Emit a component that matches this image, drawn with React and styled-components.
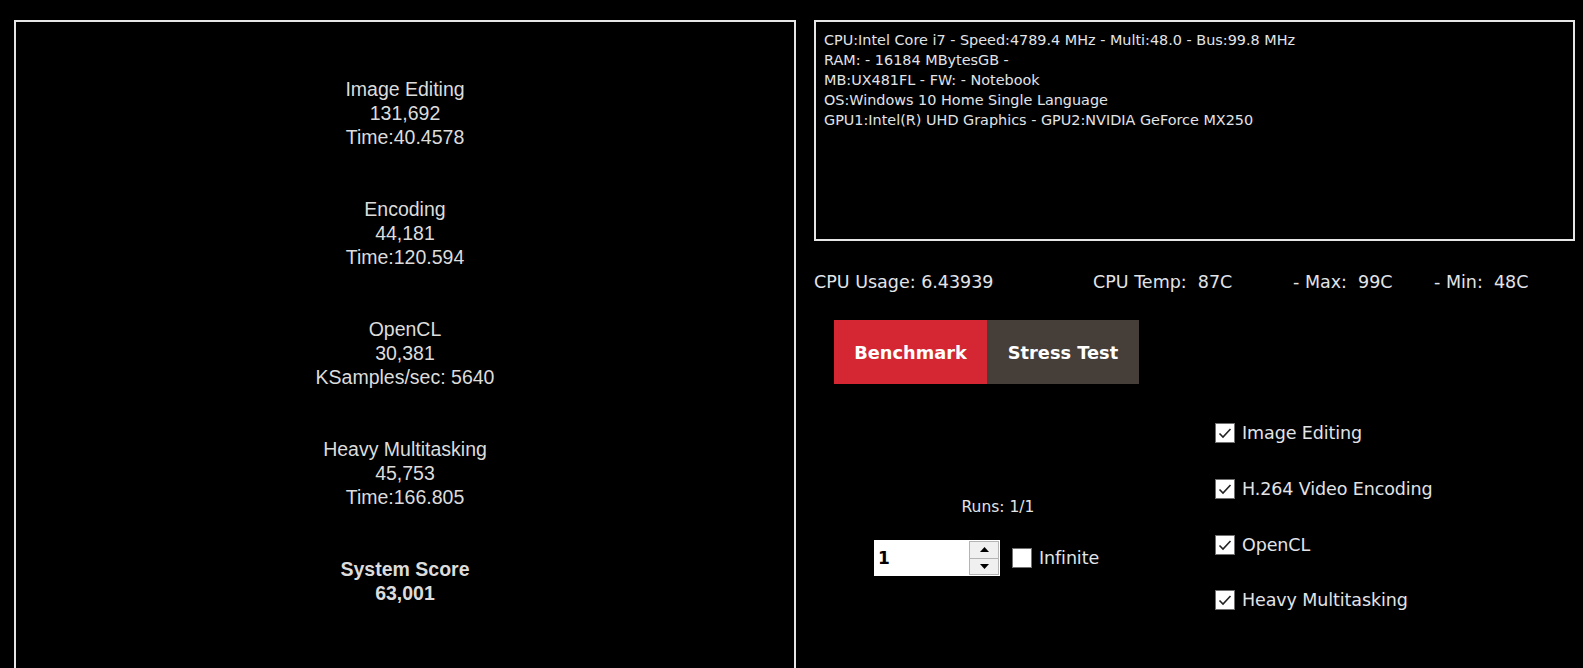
import React from 'react'
import styled, { createGlobalStyle } from 'styled-components'

const GlobalStyle = createGlobalStyle`
    html, body {
        margin: 0;
        padding: 0;
        background: #000;
        overflow: hidden;
    }
`;

const Page = styled.div`
    display: flex;
    align-items: flex-start;
    gap: 18px;
    padding: 20px 0 0 14px;
    height: 668px;
    box-sizing: border-box;
`;

const ResultsPanel = styled.div`
    width: 782px;
    height: 720px;
    box-sizing: border-box;
    border: 2px solid #e6e6e6;
    padding-top: 55px;
    display: flex;
    flex-direction: column;
    align-items: center;
    gap: 48px;
    font-family: 'Liberation Sans', Arial, sans-serif;
    font-size: 19.5px;
    line-height: 24px;
    color: #dcdcdc;
`;

const ResultGroup = styled.div`
    text-align: center;
    font-weight: ${props => props.$bold ? 700 : 400};
`;

const RightColumn = styled.div`
    width: 761px;
    display: flex;
    flex-direction: column;
    font-family: 'DejaVu Sans', sans-serif;
    color: #e2e4e8;
`;

const InfoBox = styled.div`
    height: 221px;
    box-sizing: border-box;
    border: 2px solid #e6e6e6;
    padding: 8px 8px;
    font-size: 14.4px;
    line-height: 20px;
`;

const StatusRow = styled.div`
    display: grid;
    grid-template-columns: 279px 200px 141px auto;
    margin-top: 31px;
    font-size: 17.5px;
    line-height: 20px;
    white-space: pre;
`;

const ModeTabs = styled.div`
    display: flex;
    margin: 28px 0 0 20px;
`;

const ModeTab = styled.button`
    width: ${props => props.$width}px;
    height: 64px;
    border: none;
    padding: 0;
    background: ${props => props.$active ? '#d42733' : '#453e39'};
    color: #fff;
    font-family: 'DejaVu Sans', sans-serif;
    font-weight: 700;
    font-size: 17.8px;
    cursor: pointer;
`;

const LowerArea = styled.div`
    display: grid;
    grid-template-columns: 401px auto;
    margin-top: 39px;
`;

const RunsBlock = styled.div`
    padding: 74px 0 0 60px;
    display: flex;
    flex-direction: column;
`;

const RunsLabel = styled.div`
    width: 248px;
    text-align: center;
    font-size: 15.5px;
    line-height: 20px;
`;

const SpinRow = styled.div`
    display: flex;
    align-items: center;
    margin-top: 23px;
`;

const SpinBox = styled.div`
    width: 126px;
    height: 36px;
    background: #fff;
    display: flex;
    align-items: center;
    justify-content: space-between;
    box-sizing: border-box;
    padding: 1px 1px 1px 4px;
`;

const SpinValue = styled.span`
    color: #000;
    font-weight: 700;
    font-size: 17px;
    font-family: 'DejaVu Sans', sans-serif;
`;

const SpinButtons = styled.div`
    width: 30px;
    height: 34px;
    display: flex;
    flex-direction: column;
`;

const SpinButton = styled.div`
    flex: 1;
    background: #f0f0f0;
    border: 1px solid #b4b4b4;
    display: flex;
    align-items: center;
    justify-content: center;
    &:first-child {
        border-bottom: none;
    }
`;

const Box = styled.span`
    width: 20px;
    height: 20px;
    box-sizing: border-box;
    background: #fff;
    border: 1px solid #707070;
    display: inline-flex;
    align-items: center;
    justify-content: center;
    flex-shrink: 0;
`;

const CheckLabel = styled.label`
    display: flex;
    align-items: center;
    gap: 7px;
    font-size: 17.5px;
    line-height: 20px;
    letter-spacing: -0.1px;
    cursor: pointer;
`;

const InfiniteLabel = styled(CheckLabel)`
    margin-left: 12px;
`;

const TestList = styled.div`
    display: flex;
    flex-direction: column;
    gap: 35.8px;
`;

const Tick = () => (
    <svg width="14" height="12" viewBox="0 0 14 12">
        <path d="M1.5 6.5 L5 10 L12.5 2" fill="none" stroke="#222" strokeWidth="1.6" />
    </svg>
);

const Arrow = ({ up }) => (
    <svg width="9" height="5" viewBox="0 0 9 5">
        <path d={up ? 'M0 5 L4.5 0 L9 5 Z' : 'M0 0 L4.5 5 L9 0 Z'} fill="#000" />
    </svg>
);

const results = [
    { name: 'Image Editing', score: '131,692', detail: 'Time:40.4578' },
    { name: 'Encoding', score: '44,181', detail: 'Time:120.594' },
    { name: 'OpenCL', score: '30,381', detail: 'KSamples/sec: 5640' },
    { name: 'Heavy Multitasking', score: '45,753', detail: 'Time:166.805' },
];

const tests = ['Image Editing', 'H.264 Video Encoding', 'OpenCL', 'Heavy Multitasking'];

const App = () => {
    return (
        <>
            <GlobalStyle />
            <Page>
                <ResultsPanel>
                    {results.map(r => (
                        <ResultGroup key={r.name}>
                            <div>{r.name}</div>
                            <div>{r.score}</div>
                            <div>{r.detail}</div>
                        </ResultGroup>
                    ))}
                    <ResultGroup $bold>
                        <div>System Score</div>
                        <div>63,001</div>
                    </ResultGroup>
                </ResultsPanel>
                <RightColumn>
                    <InfoBox>
                        <div>CPU:Intel Core i7 - Speed:4789.4 MHz - Multi:48.0 - Bus:99.8 MHz</div>
                        <div>RAM: - 16184 MBytesGB -</div>
                        <div>MB:UX481FL - FW: - Notebook</div>
                        <div>OS:Windows 10 Home Single Language</div>
                        <div>GPU1:Intel(R) UHD Graphics - GPU2:NVIDIA GeForce MX250</div>
                    </InfoBox>
                    <StatusRow>
                        <span>CPU Usage: 6.43939</span>
                        <span>CPU Temp:  87C</span>
                        <span>- Max:  99C</span>
                        <span>- Min:  48C</span>
                    </StatusRow>
                    <ModeTabs>
                        <ModeTab $active $width={153}>Benchmark</ModeTab>
                        <ModeTab $width={152}>Stress Test</ModeTab>
                    </ModeTabs>
                    <LowerArea>
                        <RunsBlock>
                            <RunsLabel>Runs: 1/1</RunsLabel>
                            <SpinRow>
                                <SpinBox>
                                    <SpinValue>1</SpinValue>
                                    <SpinButtons>
                                        <SpinButton><Arrow up /></SpinButton>
                                        <SpinButton><Arrow /></SpinButton>
                                    </SpinButtons>
                                </SpinBox>
                                <InfiniteLabel>
                                    <Box />
                                    Infinite
                                </InfiniteLabel>
                            </SpinRow>
                        </RunsBlock>
                        <TestList>
                            {tests.map(t => (
                                <CheckLabel key={t}>
                                    <Box><Tick /></Box>
                                    {t}
                                </CheckLabel>
                            ))}
                        </TestList>
                    </LowerArea>
                </RightColumn>
            </Page>
        </>
    )
}

export default App
